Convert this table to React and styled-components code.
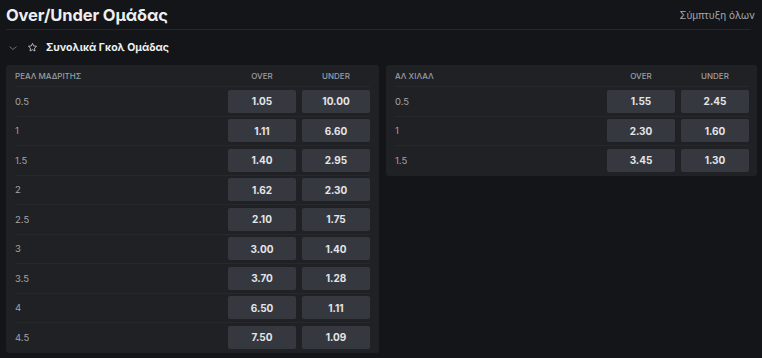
import styled, { createGlobalStyle } from "styled-components"

const GlobalStyle = createGlobalStyle`
	html, body {
		margin: 0;
		padding: 0;
		background: #141518;
		font-family: "Inter", "Noto Sans", "DejaVu Sans", sans-serif;
	}
`

const markets = [
	{
		team: "ΡΕΑΛ ΜΑΔΡΙΤΗΣ",
		rows: [
			["0.5", "1.05", "10.00"],
			["1", "1.11", "6.60"],
			["1.5", "1.40", "2.95"],
			["2", "1.62", "2.30"],
			["2.5", "2.10", "1.75"],
			["3", "3.00", "1.40"],
			["3.5", "3.70", "1.28"],
			["4", "6.50", "1.11"],
			["4.5", "7.50", "1.09"],
		],
	},
	{
		team: "ΑΛ ΧΙΛΑΛ",
		rows: [
			["0.5", "1.55", "2.45"],
			["1", "2.30", "1.60"],
			["1.5", "3.45", "1.30"],
		],
	},
]

const Page = styled.div`
	width: 762px;
	height: 358px;
	box-sizing: border-box;
	padding: 0 5px 0 6px;
	overflow: hidden;
`

const TopBar = styled.div`
	display: flex;
	align-items: center;
	justify-content: space-between;
	height: 29px;
	border-bottom: 1px solid #25272b;
	margin-right: 6px;
`

const Title = styled.h1`
	margin: 0;
	font-size: 16.5px;
	font-weight: 700;
	color: #eeeff1;
	letter-spacing: -0.1px;
`

const Collapse = styled.span`
	font-size: 10px;
	color: #a7a9ad;
	margin-right: -4px;
`

const SectionHead = styled.div`
	display: flex;
	align-items: center;
	height: 35px;
	padding-left: 2px;
`

const SectionTitle = styled.span`
	font-size: 10.5px;
	font-weight: 700;
	color: #eeeff1;
	margin-left: 8px;
`

const IconSlot = styled.span`
	display: flex;
	margin-left: ${(p) => p.$ml}px;
`

const Grid = styled.div`
	display: grid;
	grid-template-columns: 373px 371px;
	gap: 7px;
	align-items: start;
`

const Panel = styled.div`
	background: #1f2125;
	border-radius: 3px;
	padding-bottom: 1.5px;
`

const Row = styled.div`
	display: grid;
	grid-template-columns: 1fr 68px 68px;
	column-gap: 6px;
	align-items: center;
	height: ${(p) => (p.$head ? "21px" : "29.5px")};
	box-sizing: border-box;
	margin: 0 ${(p) => p.$pr}px 0 9px;
	border-top: ${(p) => (p.$first ? "none" : "1px solid #26282c")};
`

const HeadLabel = styled.span`
	font-size: 8px;
	font-weight: 500;
	color: #9c9ea3;
	text-transform: uppercase;
	text-align: ${(p) => (p.$center ? "center" : "left")};
`

const Line = styled.span`
	font-size: 9.5px;
	color: #a3a5a9;
`

const Odd = styled.button`
	height: 23px;
	border: none;
	border-radius: 2px;
	background: #363840;
	color: #e4e5e7;
	font-family: inherit;
	font-size: 10px;
	font-weight: 700;
	padding: 0;
	cursor: pointer;
`

const Chevron = () => (
	<svg width="10" height="10" viewBox="0 0 10 10" fill="none">
		<path d="M1.5 3.5 L5 6.5 L8.5 3.5" stroke="#6f7176" strokeWidth="1" />
	</svg>
)

const Star = () => (
	<svg width="11" height="11" viewBox="0 0 24 24" fill="none">
		<path
			d="M12 3l2.7 5.6 6.1.8-4.5 4.2 1.1 6.1L12 16.8 6.6 19.7l1.1-6.1L3.2 9.4l6.1-.8z"
			stroke="#c9cacd"
			strokeWidth="1.9"
			strokeLinejoin="round"
		/>
	</svg>
)

const Market = ({ team, rows, pr }) => (
	<Panel>
		<Row $head $first $pr={pr}>
			<HeadLabel>{team}</HeadLabel>
			<HeadLabel $center>OVER</HeadLabel>
			<HeadLabel $center>UNDER</HeadLabel>
		</Row>
		{rows.map(([line, over, under]) => (
			<Row key={line} $pr={pr}>
				<Line>{line}</Line>
				<Odd>{over}</Odd>
				<Odd>{under}</Odd>
			</Row>
		))}
	</Panel>
)

export default function App() {
	return (
		<Page>
			<GlobalStyle />
			<TopBar>
				<Title>Over/Under Ομάδας</Title>
				<Collapse>Σύμπτυξη όλων</Collapse>
			</TopBar>
			<SectionHead>
				<IconSlot $ml={0}>
					<Chevron />
				</IconSlot>
				<IconSlot $ml={9}>
					<Star />
				</IconSlot>
				<SectionTitle>Συνολικά Γκολ Ομάδας</SectionTitle>
			</SectionHead>
			<Grid>
				<Market {...markets[0]} pr={9} />
				<Market {...markets[1]} pr={8} />
			</Grid>
		</Page>
	)
}
